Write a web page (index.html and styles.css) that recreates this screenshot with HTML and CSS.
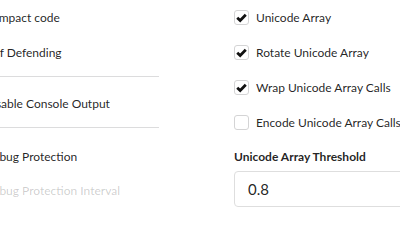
FILE: index.html
```html
<!DOCTYPE html>
<html>
<head>
<meta charset="utf-8">
<link rel="stylesheet" href="styles.css">
</head>
<body>
<div class="page">
  <div class="col left">
    <div class="row"><span class="box"></span><span class="label">Compact code</span></div>
    <div class="row"><span class="box"></span><span class="label">Self Defending</span></div>
    <div class="divider"></div>
    <div class="row"><span class="box"></span><span class="label">Disable Console Output</span></div>
    <div class="divider"></div>
    <div class="row short"><span class="box"></span><span class="label">Debug Protection</span></div>
    <div class="row short disabled"><span class="box"></span><span class="label">Debug Protection Interval</span></div>
  </div>
  <div class="col right">
    <div class="row"><span class="box checked"><svg viewBox="0 0 14 14"><path d="M2.4 7.2 L5.6 10.3 L11.6 4.1" /></svg></span><span class="label">Unicode Array</span></div>
    <div class="row"><span class="box checked"><svg viewBox="0 0 14 14"><path d="M2.4 7.2 L5.6 10.3 L11.6 4.1" /></svg></span><span class="label">Rotate Unicode Array</span></div>
    <div class="row"><span class="box checked"><svg viewBox="0 0 14 14"><path d="M2.4 7.2 L5.6 10.3 L11.6 4.1" /></svg></span><span class="label">Wrap Unicode Array Calls</span></div>
    <div class="row"><span class="box"></span><span class="label">Encode Unicode Array Calls</span></div>
    <div class="field-label">Unicode Array Threshold</div>
    <div class="input">0.8</div>
  </div>
</div>
</body>
</html>
```
FILE: styles.css
```css
html, body {
  margin: 0;
  padding: 0;
  background: #fff;
  overflow: hidden;
}
body {
  font-family: Lato, "Open Sans", sans-serif;
  font-size: 12px;
  color: rgba(0, 0, 0, 0.87);
}
.page {
  display: grid;
  grid-template-columns: 197px 1fr;
  column-gap: 75px;
  margin-left: -38px;
  width: 485px;
}
.col {
  display: flex;
  flex-direction: column;
}
.row {
  height: 35px;
  display: flex;
  align-items: center;
  gap: 7px;
  white-space: nowrap;
}
.row.short {
  height: 34px;
}
.divider {
  height: 0;
  border-top: 1px solid #dcdcdd;
  margin: 6px 0 9px;
}
.left .divider + .row + .divider {
  margin-bottom: 11px;
}
.box {
  width: 15px;
  height: 15px;
  box-sizing: border-box;
  border: 1px solid #d4d4d5;
  border-radius: 3px;
  background: #fff;
  display: inline-flex;
  align-items: center;
  justify-content: center;
  flex: none;
}
.box svg {
  width: 13px;
  height: 13px;
}
.box svg path {
  fill: none;
  stroke: #111;
  stroke-width: 3;
  stroke-linecap: butt;
  stroke-linejoin: miter;
}
.disabled .label {
  color: rgba(0, 0, 0, 0.2);
}
.field-label {
  font-weight: 700;
  font-size: 12px;
  line-height: 16px;
  margin-top: 9px;
}
.input {
  margin-top: 6px;
  height: 36px;
  box-sizing: border-box;
  border: 1px solid #dedede;
  border-radius: 4px;
  padding-left: 13px;
  display: flex;
  align-items: center;
  font-size: 15px;
  width: 200px;
}
```
